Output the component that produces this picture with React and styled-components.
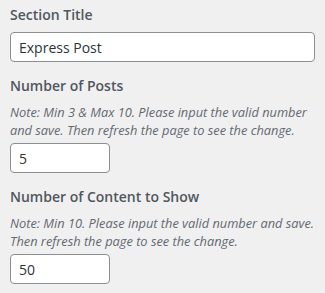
import styled, { createGlobalStyle } from "styled-components";

const GlobalStyle = createGlobalStyle`
  body {
    margin: 0;
    background: #f0f0f1;
    font-family: "Open Sans", "Noto Sans", sans-serif;
  }
`;

const Panel = styled.div`
  padding: 5px 10px 0 10px;
  display: flex;
  flex-direction: column;
  gap: 14px;
`;

const Field = styled.div`
  display: flex;
  flex-direction: column;
`;

const Label = styled.label`
  font-size: 14px;
  line-height: 20px;
  font-weight: 600;
  color: #50575e;
  margin-bottom: 7px;
`;

const Note = styled.p`
  margin: 0 0 4px 0;
  font-size: 12.8px;
  line-height: 18px;
  font-style: italic;
  color: #646970;
  white-space: nowrap;
`;

const Input = styled.input`
  box-sizing: border-box;
  width: ${(p) => (p.$small ? "100px" : "100%")};
  height: 30px;
  padding: 0 8px;
  border: 1px solid #8c8f94;
  border-radius: 4px;
  background: #fff;
  font-family: inherit;
  font-size: 14px;
  color: #2c3338;
  outline: none;
`;

const App = () => {
  return (
    <>
      <GlobalStyle />
      <Panel>
        <Field>
          <Label>Section Title</Label>
          <Input type="text" defaultValue="Express Post" />
        </Field>
        <Field>
          <Label>Number of Posts</Label>
          <Note>
            Note: Min 3 &amp; Max 10. Please input the valid number
            <br />
            and save. Then refresh the page to see the change.
          </Note>
          <Input $small type="text" defaultValue="5" />
        </Field>
        <Field>
          <Label>Number of Content to Show</Label>
          <Note>
            Note: Min 10. Please input the valid number and save.
            <br />
            Then refresh the page to see the change.
          </Note>
          <Input $small type="text" defaultValue="50" />
        </Field>
      </Panel>
    </>
  );
};

export default App;
